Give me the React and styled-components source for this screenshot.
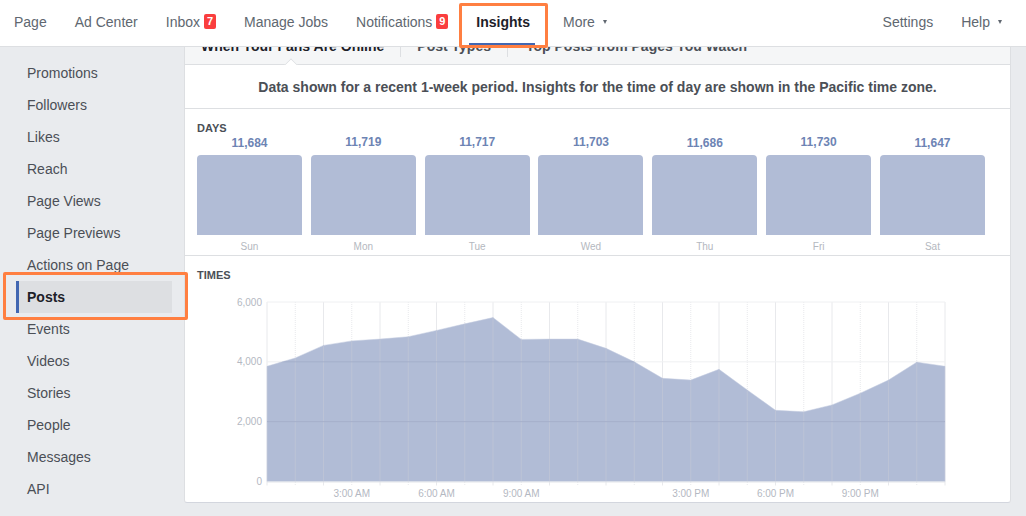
import React from "react"
import styled, { createGlobalStyle } from "styled-components"

const navLeft = [
  { label: "Page" },
  { label: "Ad Center" },
  { label: "Inbox", badge: 7 },
  { label: "Manage Jobs" },
  { label: "Notifications", badge: 9 },
  { label: "Insights", active: true },
  { label: "More", caret: true },
]
const navRight = [{ label: "Settings" }, { label: "Help", caret: true }]

const sideItems = [
  "Promotions",
  "Followers",
  "Likes",
  "Reach",
  "Page Views",
  "Page Previews",
  "Actions on Page",
  "Posts",
  "Events",
  "Videos",
  "Stories",
  "People",
  "Messages",
  "API",
]

const days = [
  { day: "Sun", value: "11,684", low: true },
  { day: "Mon", value: "11,719" },
  { day: "Tue", value: "11,717" },
  { day: "Wed", value: "11,703" },
  { day: "Thu", value: "11,686", low: true },
  { day: "Fri", value: "11,730" },
  { day: "Sat", value: "11,647", low: true },
]

// hourly samples read off the y axis, one every hour
const hours = [
  3850, 4130, 4550, 4700, 4760, 4840, 5050, 5270, 5480, 4750, 4760, 4760, 4450,
  4000, 3450, 3390, 3750, 3060, 2380, 2330, 2560, 2950, 3390, 3990, 3850,
]

const X0 = 82
const STEP = 28.25
const Y0 = 199.5
const PER_UNIT = 179.5 / 6000
const px = (i) => X0 + i * STEP
const py = (v) => Y0 - v * PER_UNIT

const GlobalStyle = createGlobalStyle`
  html, body {
    margin: 0;
    padding: 0;
    background: #e9ebee;
  }
  body {
    font-family: "Liberation Sans", Arial, sans-serif;
  }
`

const Page = styled.div`
  position: relative;
  width: 1026px;
  height: 516px;
  overflow: hidden;
  background: #e9ebee;
`
const TopBar = styled.nav`
  position: relative;
  z-index: 2;
  display: flex;
  justify-content: space-between;
  height: 46px;
  padding-right: 10px;
  background: #fff;
  border-bottom: 1px solid #dddfe2;
`
const NavGroup = styled.div`
  display: flex;
`
const NavItem = styled.div`
  position: relative;
  display: flex;
  align-items: center;
  padding: 0 14px 2px;
  margin-right: ${(p) => (p.$active ? "5px" : "0")};
  font-size: 14px;
  font-weight: ${(p) => (p.$active ? "bold" : "normal")};
  color: ${(p) => (p.$active ? "#1d2129" : "#606770")};

  &::after {
    content: "";
    display: ${(p) => (p.$active ? "block" : "none")};
    position: absolute;
    left: 7px;
    right: 9px;
    bottom: 0;
    height: 3px;
    background: #4267b2;
  }
`
const Badge = styled.span`
  margin-left: 4px;
  margin-top: -1px;
  min-width: 12px;
  height: 15px;
  line-height: 15px;
  border-radius: 2px;
  background: #fa3e3e;
  color: #fff;
  font-size: 11px;
  font-weight: bold;
  text-align: center;
`
const Caret = styled.span`
  margin-left: 8px;
  width: 0;
  height: 0;
  border-left: 2.5px solid transparent;
  border-right: 2.5px solid transparent;
  border-top: 4px solid #606770;
`
const Body = styled.div`
  display: flex;
`
const Sidebar = styled.aside`
  flex: 0 0 184px;
  padding: 10px 12px 0 16px;
  box-sizing: border-box;
`
const SideItem = styled.div`
  height: 32px;
  line-height: 32px;
  padding-left: ${(p) => (p.$active ? "8px" : "11px")};
  font-size: 14px;
  font-weight: ${(p) => (p.$active ? "bold" : "normal")};
  color: ${(p) => (p.$active ? "#1d2129" : "#4b4f56")};
  background: ${(p) => (p.$active ? "#dddfe2" : "transparent")};
  border-left: ${(p) => (p.$active ? "3px solid #4267b2" : "none")};
`
const Panel = styled.main`
  width: 827px;
  height: 456px;
  box-sizing: border-box;
  background: #fff;
  border: 1px solid #dddfe2;
  border-top: 0;
  border-bottom-color: #d3d6de;
  border-radius: 0 0 3px 3px;
`
const TabStrip = styled.div`
  position: relative;
  display: flex;
  height: 17px;
  background: #f5f6f7;
  border-bottom: 1px solid #dddfe2;
`
const Tab = styled.div`
  height: 10px;
  padding: 0 ${(p) => p.$pad || 16}px;
  border-right: 1px solid ${(p) => (p.$last ? "transparent" : "#dddfe2")};
`
const TabLabel = styled.span`
  display: block;
  margin-top: -9px;
  line-height: 16px;
  font-size: 14px;
  font-weight: bold;
  color: ${(p) => (p.$current ? "#1d2129" : "#4b4f56")};
`
const Notch = styled.span`
  position: absolute;
  left: 101px;
  bottom: -6px;
  width: 9px;
  height: 9px;
  background: #fff;
  border-left: 1px solid #dddfe2;
  border-top: 1px solid #dddfe2;
  transform: rotate(45deg);
  clip-path: polygon(0 0, 100% 0, 0 100%);
`
const Notice = styled.div`
  height: 43px;
  line-height: 45px;
  text-align: center;
  font-size: 14px;
  font-weight: bold;
  color: #4b4f56;
  border-bottom: 1px solid #dddfe2;
`
const DaysSection = styled.section`
  height: 147px;
  box-sizing: border-box;
  padding: 13px 25px 0 12px;
  border-bottom: 1px solid #dddfe2;
`
const SectionTitle = styled.div`
  font-size: 11px;
  line-height: 13px;
  font-weight: bold;
  color: #4b4f56;
`
const DayRow = styled.div`
  display: flex;
  justify-content: space-between;
`
const DayColumn = styled.div`
  width: 105px;
  text-align: center;
`
const DayValue = styled.div`
  height: 20px;
  padding-top: ${(p) => (p.$low ? "1px" : "0")};
  box-sizing: border-box;
  font-size: 12px;
  line-height: 14px;
  font-weight: bold;
  color: #6d84b4;
`
const DayBar = styled.div`
  height: 80px;
  background: #b1bcd6;
  border-radius: 4px 4px 0 0;
`
const DayLabel = styled.div`
  margin-top: 6px;
  font-size: 10px;
  line-height: 12px;
  color: #b4b8c0;
`
const TimesSection = styled.section`
  padding: 13px 12px 0;
`
const ChartSvg = styled.svg`
  display: block;
  margin: 0 0 0 -12px;
`
const AxisText = styled.text`
  font-size: 10px;
  fill: #b4b8c2;
`
const Highlight = styled.div`
  position: absolute;
  z-index: 3;
  box-sizing: border-box;
  border: 3px solid #ff7f41;
  border-radius: 2px;
  left: ${(p) => p.$x}px;
  top: ${(p) => p.$y}px;
  width: ${(p) => p.$w}px;
  height: ${(p) => p.$h}px;
`

function TimesChart() {
  const area =
    `M${px(0)} ${Y0} ` +
    hours.map((v, i) => `L${px(i)} ${py(v)}`).join(" ") +
    ` L${px(24)} ${Y0} Z`
  const top = py(6000)
  return (
    <ChartSvg width="825" height="219" viewBox="0 0 825 219">
      <defs>
        <clipPath id="under-curve">
          <path d={area} />
        </clipPath>
      </defs>
      {hours.map((_, i) => (
        <line
          key={i}
          x1={px(i)}
          x2={px(i)}
          y1={top}
          y2={Y0 + 4}
          stroke="#e8e9ec"
          strokeDasharray={i % 2 ? "1 1" : undefined}
        />
      ))}
      {[6000, 4000, 2000].map((v) => (
        <line key={v} x1={X0} x2={px(24)} y1={py(v)} y2={py(v)} stroke="#eff0f2" />
      ))}
      <path d={area} fill="#b1bcd6" stroke="#c4cce0" strokeWidth="0.5" />
      <g clipPath="url(#under-curve)">
        {hours.map((_, i) => (
          <line
            key={i}
            x1={px(i)}
            x2={px(i)}
            y1={top}
            y2={Y0}
            stroke="#bcc3d6"
            strokeWidth="1"
          />
        ))}
        {[4000, 2000].map((v) => (
          <line key={v} x1={X0} x2={px(24)} y1={py(v)} y2={py(v)} stroke="#a5afca" />
        ))}
      </g>
      <line x1={X0} x2={px(24)} y1={Y0 + 0.5} y2={Y0 + 0.5} stroke="#e4e6ea" />
      {[6000, 4000, 2000, 0].map((v) => (
        <AxisText key={v} x={X0 - 5} y={py(v) + 3.5} textAnchor="end">
          {v.toLocaleString("en-US")}
        </AxisText>
      ))}
      {["3:00 AM", "6:00 AM", "9:00 AM", null, "3:00 PM", "6:00 PM", "9:00 PM"].map(
        (t, i) =>
          t && (
            <AxisText key={t} x={px((i + 1) * 3)} y={Y0 + 15.5} textAnchor="middle">
              {t}
            </AxisText>
          )
      )}
    </ChartSvg>
  )
}

export default function App() {
  return (
    <Page>
      <GlobalStyle />
      <TopBar>
        <NavGroup>
          {navLeft.map((n) => (
            <NavItem key={n.label} $active={n.active}>
              {n.label}
              {n.badge && <Badge>{n.badge}</Badge>}
              {n.caret && <Caret />}
            </NavItem>
          ))}
        </NavGroup>
        <NavGroup>
          {navRight.map((n) => (
            <NavItem key={n.label}>
              {n.label}
              {n.caret && <Caret />}
            </NavItem>
          ))}
        </NavGroup>
      </TopBar>
      <Body>
        <Sidebar>
          {sideItems.map((s) => (
            <SideItem key={s} $active={s === "Posts"}>
              {s}
            </SideItem>
          ))}
        </Sidebar>
        <Panel>
          <TabStrip>
            <Tab>
              <TabLabel $current>When Your Fans Are Online</TabLabel>
            </Tab>
            <Tab>
              <TabLabel>Post Types</TabLabel>
            </Tab>
            <Tab $pad={18} $last>
              <TabLabel>Top Posts from Pages You Watch</TabLabel>
            </Tab>
            <Notch />
          </TabStrip>
          <Notice>
            Data shown for a recent 1-week period. Insights for the time of day are shown in the Pacific time zone.
          </Notice>
          <DaysSection>
            <SectionTitle>DAYS</SectionTitle>
            <DayRow>
              {days.map((d) => (
                <DayColumn key={d.day}>
                  <DayValue $low={d.low}>{d.value}</DayValue>
                  <DayBar />
                  <DayLabel>{d.day}</DayLabel>
                </DayColumn>
              ))}
            </DayRow>
          </DaysSection>
          <TimesSection>
            <SectionTitle>TIMES</SectionTitle>
            <TimesChart />
          </TimesSection>
        </Panel>
      </Body>
      <Highlight $x={459} $y={3} $w={89} $h={45} />
      <Highlight $x={3} $y={272} $w={185} $h={48} />
    </Page>
  )
}
